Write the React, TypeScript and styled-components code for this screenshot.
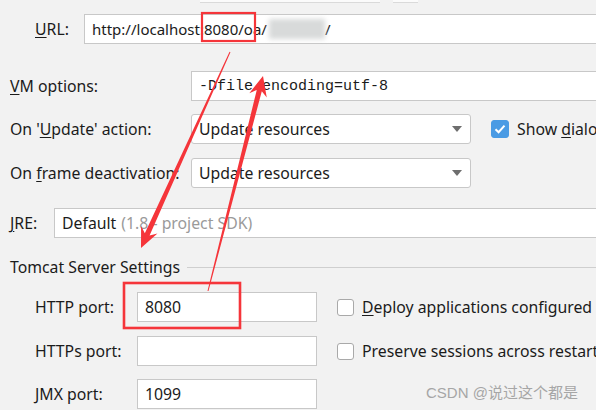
import React from 'react';
import styled, { createGlobalStyle } from 'styled-components';

const GlobalStyle = createGlobalStyle`
  html, body {
    margin: 0;
    padding: 0;
    background: #f2f2f2;
  }
  body {
    font-family: 'Noto Sans', 'Noto Sans CJK SC', sans-serif;
  }
`;

const Page = styled.div`
  position: relative;
  width: 596px;
  height: 410px;
  overflow: hidden;
  background: #f2f2f2;
  color: #1b1b1b;
  font-size: 15.8px;
  display: flex;
  flex-direction: column;
`;

const TopStrip = styled.div`
  display: flex;
  height: 3px;
  gap: 13px;
  padding-left: 200px;
`;

const StripPiece = styled.div<{ $w: number }>`
  width: ${(p) => p.$w}px;
  height: 2px;
  background: #fbfbfb;
  border-bottom: 1px solid #dadada;
`;

const Row = styled.div<{ $top: number; $indent?: number }>`
  display: flex;
  align-items: center;
  margin-top: ${(p) => p.$top}px;
  padding-left: ${(p) => p.$indent ?? 10}px;
  height: 30px;
  white-space: nowrap;
`;

const Label = styled.div<{ $w: number }>`
  width: ${(p) => p.$w}px;
  flex-shrink: 0;
  line-height: 20px;
`;

const Mn = styled.span`
  text-decoration: underline;
  text-underline-offset: 2px;
`;

const Field = styled.div<{ $w?: number; $mono?: boolean; $size?: number }>`
  box-sizing: border-box;
  height: 30px;
  ${(p) => (p.$w ? `width: ${p.$w}px;` : 'flex: 1 0 auto; margin-right: -10px;')}
  background: #fff;
  border: 1px solid #c8c8c8;
  display: flex;
  align-items: center;
  padding-left: 7px;
  flex-shrink: 0;
  font-family: ${(p) => (p.$mono ? "'Liberation Mono', monospace" : 'inherit')};
  font-size: ${(p) => (p.$size ? `${p.$size}px` : 'inherit')};
`;

const Muted = styled.span`
  color: #9a9a9a;
  margin-left: 5px;
`;

const Blur = styled.span`
  display: inline-block;
  width: 56px;
  height: 20px;
  margin: 0 0 0 2px;
  background: #d8dada;
  filter: blur(2.5px);
  vertical-align: middle;
`;

const Combo = styled.div`
  box-sizing: border-box;
  width: 280px;
  height: 30px;
  flex-shrink: 0;
  background: #fff;
  border: 1px solid #c8c8c8;
  border-radius: 3px;
  display: flex;
  align-items: center;
  justify-content: space-between;
  padding: 0 8px 0 7px;
`;

const Caret = styled.div`
  width: 0;
  height: 0;
  border-left: 5px solid transparent;
  border-right: 5px solid transparent;
  border-top: 6px solid #6e6e6e;
`;

const Check = styled.div<{ $on?: boolean; $size: number }>`
  box-sizing: border-box;
  width: ${(p) => p.$size}px;
  height: ${(p) => p.$size}px;
  border-radius: 3px;
  flex-shrink: 0;
  margin: 0 8px 0 20px;
  background: ${(p) => (p.$on ? '#4a9be4' : '#fff')};
  border: 1px solid ${(p) => (p.$on ? '#4a9be4' : '#a9a9a9')};
  display: flex;
  align-items: center;
  justify-content: center;
`;

const CheckText = styled.span`
  line-height: 20px;
`;

const Section = styled.div`
  display: flex;
  align-items: center;
  margin-top: 19px;
  padding-left: 10px;
  height: 20px;
  gap: 7px;
`;

const Rule = styled.div`
  flex: 1;
  height: 1px;
  background: #cfcfcf;
`;

const Overlay = styled.svg`
  position: absolute;
  left: 0;
  top: 0;
  pointer-events: none;
`;

const Watermark = styled.div`
  position: absolute;
  left: 426px;
  top: 383px;
  font-size: 15px;
  line-height: 20px;
  color: #a6a6a6;
  font-family: 'Liberation Sans', 'Noto Sans CJK SC', sans-serif;
`;

type Pt = [number, number];

// tapered arrow like the screenshot tool draws
const arrowPoints = (tail: Pt, tip: Pt) => {
  const dx = tip[0] - tail[0];
  const dy = tip[1] - tail[1];
  const len = Math.hypot(dx, dy);
  const ux = dx / len;
  const uy = dy / len;
  const nx = -uy;
  const ny = ux;
  const headLen = 20;
  const headW = 9;
  const shaftW = 2.6;
  const bx = tip[0] - ux * headLen;
  const by = tip[1] - uy * headLen;
  const inner = headLen * 0.75;
  const ix = tip[0] - ux * inner;
  const iy = tip[1] - uy * inner;
  const pts: Pt[] = [
    [tail[0] + nx * 0.5, tail[1] + ny * 0.5],
    [ix + nx * shaftW, iy + ny * shaftW],
    [bx + nx * headW, by + ny * headW],
    tip,
    [bx - nx * headW, by - ny * headW],
    [ix - nx * shaftW, iy - ny * shaftW],
    [tail[0] - nx * 0.5, tail[1] - ny * 0.5],
  ];
  return pts.map((p) => p.join(',')).join(' ');
};

const red = '#f5353a';

const App = () => (
  <>
    <GlobalStyle />
    <Page>
      <TopStrip>
        <StripPiece $w={180} />
        <StripPiece $w={25} />
      </TopStrip>

      <Row $top={11} $indent={35}>
        <Label $w={49}>
          <Mn>U</Mn>RL:
        </Label>
        <Field $size={15}>
          http://localhost:8080/oa/
          <Blur />/
        </Field>
      </Row>

      <Row $top={27}>
        <Label $w={181}>
          <Mn>V</Mn>M options:
        </Label>
        <Field $mono $size={15}>
          -Dfile.encoding=utf-8
        </Field>
      </Row>

      <Row $top={13}>
        <Label $w={181}>
          On '<Mn>U</Mn>pdate' action:
        </Label>
        <Combo>
          Update resources
          <Caret />
        </Combo>
        <Check $on $size={18}>
          <svg width="12" height="10" viewBox="0 0 12 10">
            <path d="M1.5 5.2 L4.6 8.2 L10.5 1.6" fill="none" stroke="#fff" strokeWidth="2" />
          </svg>
        </Check>
        <CheckText>
          Show <Mn>d</Mn>ialog
        </CheckText>
      </Row>

      <Row $top={14}>
        <Label $w={181}>
          On <Mn>f</Mn>rame deactivation:
        </Label>
        <Combo>
          Update resources
          <Caret />
        </Combo>
      </Row>

      <Row $top={20}>
        <Label $w={44}>
          <Mn>J</Mn>RE:
        </Label>
        <Field>
          Default<Muted>(1.8 - project SDK)</Muted>
        </Field>
      </Row>

      <Section>
        Tomcat Server Settings
        <Rule />
      </Section>

      <Row $top={15} $indent={35}>
        <Label $w={102}>HTTP port:</Label>
        <Field $w={180}>8080</Field>
        <Check $size={17} />
        <CheckText>
          <Mn>D</Mn>eploy applications configured in Tomcat instance
        </CheckText>
      </Row>

      <Row $top={14} $indent={35}>
        <Label $w={102}>HTTPs port:</Label>
        <Field $w={180} />
        <Check $size={17} />
        <CheckText>Preserve sessions across restarts and redeploys</CheckText>
      </Row>

      <Row $top={13} $indent={35}>
        <Label $w={102}>JMX port:</Label>
        <Field $w={180}>1099</Field>
      </Row>

      <Watermark>CSDN @说过这个都是</Watermark>

      <Overlay width="596" height="410" viewBox="0 0 596 410">
        <rect x="202" y="13" width="53" height="28" fill="none" stroke={red} strokeWidth="2.2" />
        <rect x="124" y="283" width="116" height="45" fill="none" stroke={red} strokeWidth="2.6" />
        <polygon points={arrowPoints([230, 52], [141, 248])} fill={red} />
        <polygon points={arrowPoints([208, 291], [263, 76])} fill={red} />
      </Overlay>
    </Page>
  </>
);

export default App;
